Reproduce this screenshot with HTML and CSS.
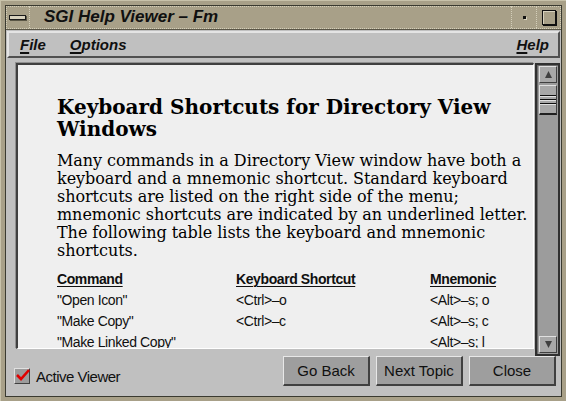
FILE: index.html
```html
<!DOCTYPE html>
<html>
<head>
<meta charset="utf-8">
<link rel="stylesheet" href="styles.css">
</head>
<body>
<div class="frame">
  <div class="win">
    <div class="titlebar">
      <div class="tb-menu"><span class="tb-bar"></span></div>
      <div class="tb-title">SGI Help Viewer – Fm</div>
      <div class="tb-min"><span class="tb-dot"></span></div>
      <div class="tb-max"><span class="tb-sq"></span></div>
    </div>
    <div class="client">
      <div class="menubar">
        <span class="menu"><u>F</u>ile</span>
        <span class="menu"><u>O</u>ptions</span>
        <span class="menu help"><u>H</u>elp</span>
      </div>
      <div class="work">
        <div class="textarea">
          <div class="doc">
            <h1>Keyboard Shortcuts for Directory View Windows</h1>
            <p>Many commands in a Directory View window have both a keyboard and a mnemonic shortcut. Standard keyboard shortcuts are listed on the right side of the menu; mnemonic shortcuts are indicated by an underlined letter. The following table lists the keyboard and mnemonic shortcuts.</p>
            <div class="table">
              <div class="th c1">Command</div><div class="th c2">Keyboard Shortcut</div><div class="th c3">Mnemonic</div>
              <div class="c1">"Open Icon"</div><div class="c2">&lt;Ctrl&gt;–o</div><div class="c3">&lt;Alt&gt;–s; o</div>
              <div class="c1">"Make Copy"</div><div class="c2">&lt;Ctrl&gt;–c</div><div class="c3">&lt;Alt&gt;–s; c</div>
              <div class="c1">"Make Linked Copy"</div><div class="c2"></div><div class="c3">&lt;Alt&gt;–s; l</div>
            </div>
          </div>
        </div>
        <div class="scrollbar">
          <div class="sb-btn"><svg width="15" height="15" viewBox="0 0 15 15"><polygon points="7.5,4 11,11 4,11" fill="#404040"/></svg></div>
          <div class="sb-thumb"><span class="grip"></span><span class="grip"></span><span class="grip"></span></div>
          <div class="sb-trough"></div>
          <div class="sb-btn"><svg width="15" height="15" viewBox="0 0 15 15"><polygon points="4,4 11,4 7.5,11" fill="#404040"/></svg></div>
        </div>
      </div>
      <div class="bottom">
        <label class="check">
          <span class="box"><svg width="16" height="16" viewBox="0 0 16 16"><path d="M2 8 L6 12 L14 3" fill="none" stroke="#e00000" stroke-width="2.6"/></svg></span>
          <span>Active Viewer</span>
        </label>
        <div class="buttons">
          <div class="btn">Go Back</div>
          <div class="btn">Next Topic</div>
          <div class="btn">Close</div>
        </div>
      </div>
    </div>
  </div>
</div>
</body>
</html>
```

FILE: styles.css
```css
html, body {
  margin: 0;
  padding: 0;
  background: #a8a088;
}
.frame {
  width: 566px;
  height: 401px;
  box-sizing: border-box;
  padding: 4px 4px 4px 4px;
  background: #a8a088;
  border-top: 1px solid #c8c2aa;
  border-left: 1px solid #c8c2aa;
}
.win {
  height: 100%;
  box-sizing: border-box;
  border: 1px solid #3a3a30;
  display: flex;
  flex-direction: column;
}
.titlebar {
  height: 22px;
  display: flex;
  background: #a8a088;
  border-bottom: 1px dotted #4a4636;
  outline: 1px dotted #d4cfba;
  outline-offset: -1px;
}
.tb-menu {
  width: 23px;
  border-right: 1px dotted #d4cfba;
  display: flex;
  align-items: center;
  justify-content: center;
}
.tb-bar {
  width: 15px;
  height: 3px;
  border: 1px solid #1a1a1a;
  background: #d8d2be;
  box-shadow: 1px 1px 0 #5a5646;
}
.tb-title {
  flex: 1;
  padding-left: 14px;
  font-family: "Liberation Sans", Arial, sans-serif;
  font-weight: bold;
  font-style: italic;
  font-size: 17px;
  line-height: 22px;
  color: #101010;
}
.tb-min {
  width: 24px;
  border-left: 1px dotted #d4cfba;
  display: flex;
  align-items: center;
  justify-content: center;
}
.tb-dot {
  width: 3px;
  height: 3px;
  background: #101010;
  box-shadow: 1px 1px 0 #d8d2be;
}
.tb-max {
  width: 24px;
  border-left: 1px dotted #d4cfba;
  display: flex;
  align-items: center;
  justify-content: center;
}
.tb-sq {
  width: 12px;
  height: 13px;
  border: 1px solid #101010;
  box-shadow: 1px 1px 0 #101010, inset 1px 1px 0 #d8d2be;
}
.client {
  flex: 1;
  background: #c0c0c0;
  border-top: 1px solid #5a5646;
  display: flex;
  flex-direction: column;
  padding: 1px 1px 0 1px;
}
.menubar {
  height: 23px;
  display: flex;
  align-items: center;
  border-top: 2px solid #e4e4e4;
  border-left: 2px solid #e4e4e4;
  border-bottom: 2px solid #505050;
  border-right: 2px solid #505050;
  font-family: "Liberation Sans", Arial, sans-serif;
  font-weight: bold;
  font-style: italic;
  font-size: 15px;
  color: #101010;
  padding-left: 11px;
}
.menu {
  margin-right: 24px;
}
.menu u {
  text-decoration-thickness: 2px;
  text-underline-offset: 2px;
}
.menu.help {
  margin-left: auto;
  margin-right: 9px;
}
.work {
  display: flex;
  align-items: flex-start;
  margin: 5px 0 0 9px;
  height: 291px;
}
.textarea {
  flex: 1;
  height: 283px;
  background: #efefef;
  border-top: 2px solid #404040;
  border-left: 2px solid #404040;
  border-right: 1px solid #ffffff;
  border-bottom: 1px solid #ffffff;
  box-shadow: -1px -1px 0 #909090;
  overflow: hidden;
}
.doc {
  padding: 31px 0 0 39px;
}
h1 {
  margin: 0;
  font-family: "DejaVu Serif", serif;
  font-weight: bold;
  font-size: 20px;
  line-height: 22px;
  color: #000;
  padding-right: 30px;
}
p {
  margin: 12px 0 0 0;
  font-family: "DejaVu Serif", serif;
  font-size: 16px;
  letter-spacing: -0.05px;
  line-height: 18px;
  color: #000;
  padding-right: 0;
}
.table {
  margin-top: 9px;
  display: grid;
  grid-template-columns: 179px 194px auto;
  grid-auto-rows: 21px;
  font-family: "Liberation Sans", Arial, sans-serif;
  font-size: 14px;
  letter-spacing: -0.4px;
  line-height: 21px;
  color: #101010;
}
.th {
  font-weight: bold;
  text-decoration: underline;
  text-decoration-thickness: 1px;
  text-underline-offset: 2px;
}
.scrollbar {
  width: 18px;
  height: 287px;
  margin-left: 1px;
  margin-right: 0;
  border: 2px solid #303030;
  background: #9c9c9c;
  padding: 1px 1px 1px 2px;
  display: flex;
  flex-direction: column;
  box-shadow: inset 1px 1px 0 #6a6a6a;
}
.sb-btn {
  height: 15px;
  background: #a8a8a8;
  border-top: 1px solid #e0e0e0;
  border-left: 1px solid #e0e0e0;
  border-right: 1px solid #404040;
  border-bottom: 1px solid #404040;
  display: flex;
  align-items: center;
  justify-content: center;
}
.sb-btn svg {
  display: block;
}
.sb-thumb {
  margin-top: 2px;
  height: 27px;
  background: #a8a8a8;
  border-top: 1px solid #e0e0e0;
  border-left: 1px solid #e0e0e0;
  border-right: 1px solid #404040;
  border-bottom: 2px solid #202020;
  display: flex;
  flex-direction: column;
  justify-content: center;
  gap: 2px;
}
.grip {
  display: block;
  height: 1px;
  background: #101010;
  border-bottom: 1px solid #e0e0e0;
}
.sb-trough {
  flex: 1;
}
.bottom {
  flex: 1;
  display: flex;
  align-items: center;
  padding: 0 4px 0 7px;
}
.check {
  display: flex;
  align-items: center;
  gap: 6px;
  font-family: "Liberation Sans", Arial, sans-serif;
  font-size: 15px;
  letter-spacing: -0.5px;
  color: #101010;
  margin-top: 2px;
}
.box {
  width: 14px;
  height: 14px;
  background: #9c9c9c;
  border-top: 1px solid #e0e0e0;
  border-left: 1px solid #e0e0e0;
  border-right: 1px solid #404040;
  border-bottom: 1px solid #404040;
  position: relative;
}
.box svg {
  position: absolute;
  left: 0;
  top: -2px;
}
.buttons {
  margin-left: auto;
  display: flex;
  gap: 6px;
  margin-top: -8px;
}
.btn {
  width: 84px;
  height: 27px;
  background: #9e9e9e;
  border-top: 1px solid #e8e8e8;
  border-left: 1px solid #e8e8e8;
  border-right: 2px solid #404040;
  border-bottom: 2px solid #404040;
  font-family: "Liberation Sans", Arial, sans-serif;
  font-size: 15px;
  line-height: 27px;
  text-align: center;
  color: #101010;
}
```
